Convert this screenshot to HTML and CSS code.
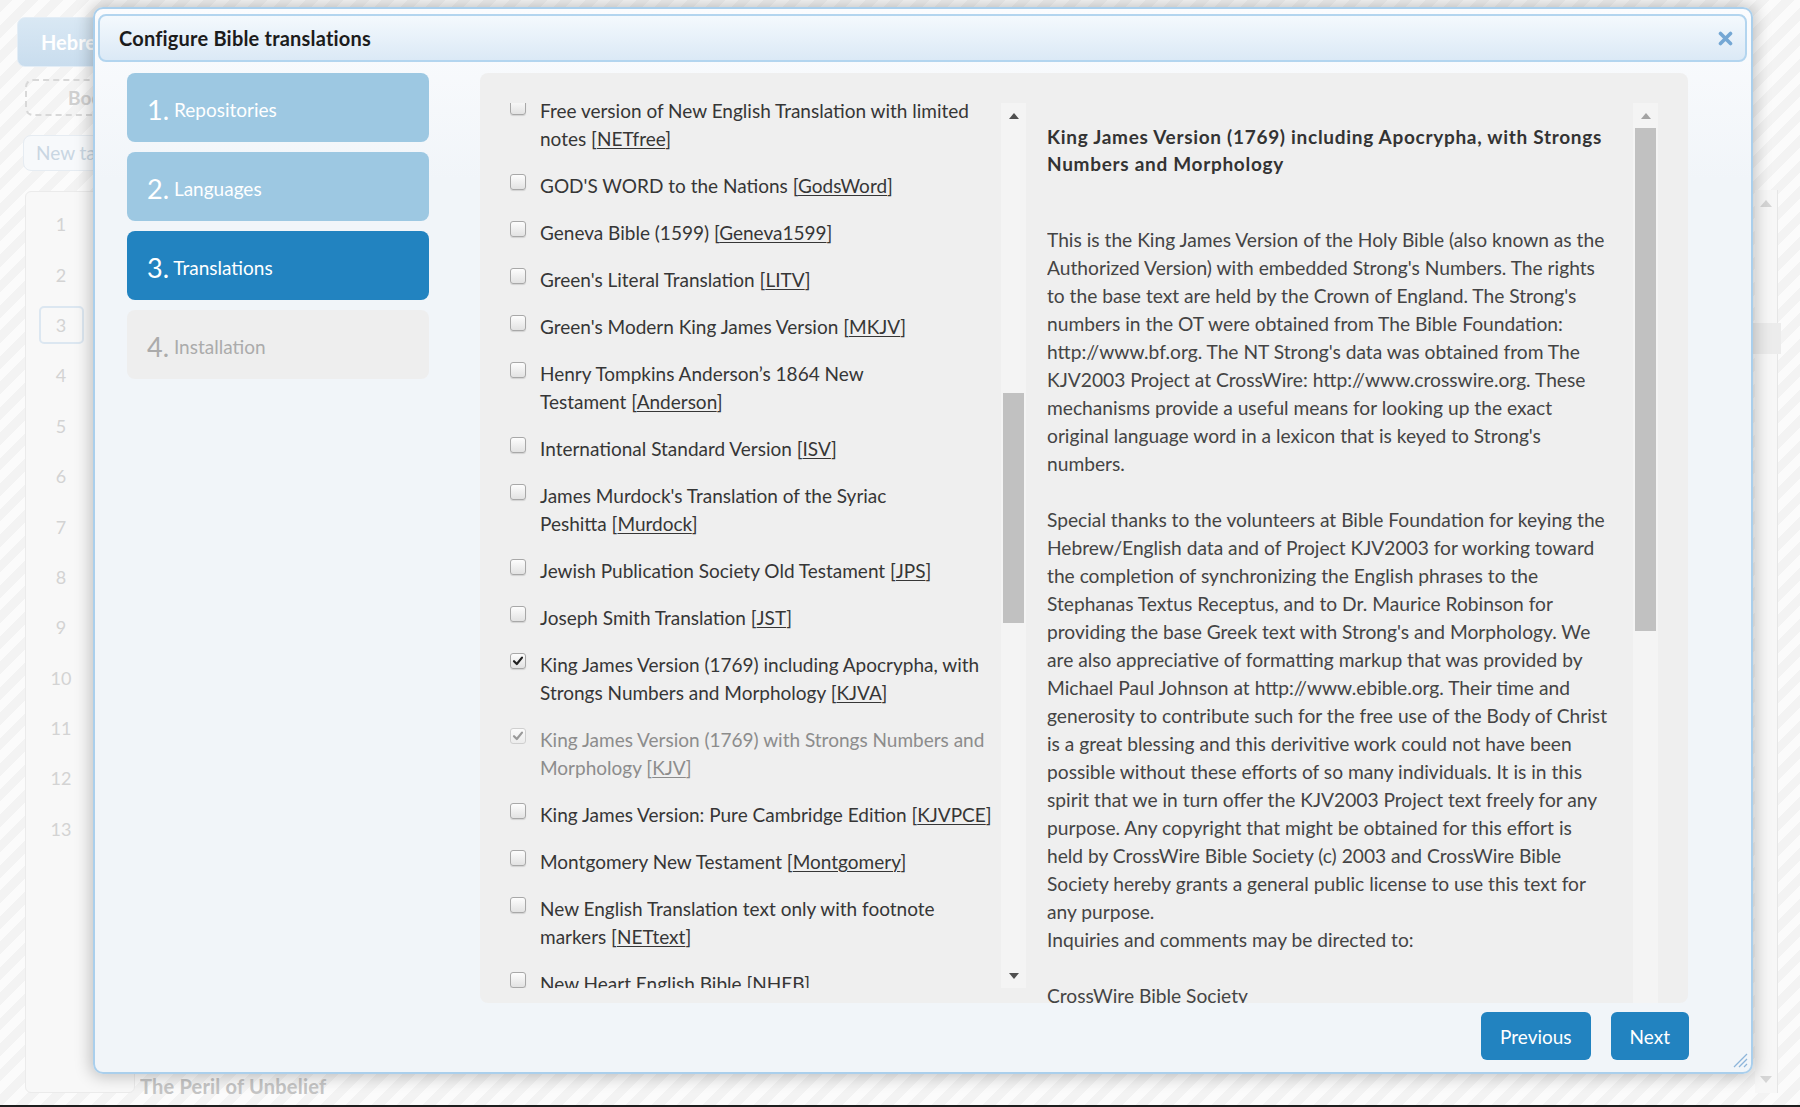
FILE: index.html
```html
<!DOCTYPE html>
<html lang="en">
<head>
<meta charset="utf-8">
<title>Configure Bible translations</title>
<link rel="stylesheet" href="styles.css">
</head>
<body>
<div class="page">
  <aside class="side">
    <div class="tab">Hebrews</div>
    <div class="dash-btn">Books</div>
    <div class="newtab">New tab</div>
    <div class="verses">
      <div class="vnum"><span>1</span></div>
      <div class="vnum"><span>2</span></div>
      <div class="vnum"><span class="sel">3</span></div>
      <div class="vnum"><span>4</span></div>
      <div class="vnum"><span>5</span></div>
      <div class="vnum"><span>6</span></div>
      <div class="vnum"><span>7</span></div>
      <div class="vnum"><span>8</span></div>
      <div class="vnum"><span>9</span></div>
      <div class="vnum"><span>10</span></div>
      <div class="vnum"><span>11</span></div>
      <div class="vnum"><span>12</span></div>
      <div class="vnum"><span>13</span></div>
    </div>
  </aside>
  <main class="main">
    <div class="chapter-clip"><div class="chapter-title">The Peril of Unbelief</div></div>
  </main>
  <aside class="rside">
    <div class="rtrack">
      <span class="rarrow up"></span>
      <div class="rbox"></div>
      <span class="rarrow down"></span>
    </div>
  </aside>
</div>
<div class="bottom-line"></div>

<div class="dialog">
  <div class="dlg-title">
    <h1>Configure Bible translations</h1>
    <svg class="close" width="15" height="15" viewBox="0 0 15 15"><path d="M2.5 2.5 L12.5 12.5 M12.5 2.5 L2.5 12.5" stroke="#74a7d4" stroke-width="3.6" stroke-linecap="round"/></svg>
  </div>
  <div class="dlg-body">
    <nav class="steps">
      <div class="step done"><span class="num">1.</span>&nbsp;Repositories</div>
      <div class="step done"><span class="num">2.</span>&nbsp;Languages</div>
      <div class="step current"><span class="num">3.</span>&nbsp;Translations</div>
      <div class="step todo"><span class="num">4.</span>&nbsp;Installation</div>
    </nav>
    <section class="panel">
      <div class="list-col">
        <div class="list-view">
          <div class="list">
            <label class="item"><span class="cb"></span><span class="lbl">Free version of New English Translation with limited notes&nbsp;[<u>NETfree</u>]</span></label>
            <label class="item"><span class="cb"></span><span class="lbl">GOD'S WORD to the Nations&nbsp;[<u>GodsWord</u>]</span></label>
            <label class="item"><span class="cb"></span><span class="lbl">Geneva Bible (1599)&nbsp;[<u>Geneva1599</u>]</span></label>
            <label class="item"><span class="cb"></span><span class="lbl">Green's Literal Translation&nbsp;[<u>LITV</u>]</span></label>
            <label class="item"><span class="cb"></span><span class="lbl">Green's Modern King James Version&nbsp;[<u>MKJV</u>]</span></label>
            <label class="item"><span class="cb"></span><span class="lbl">Henry Tompkins Anderson’s 1864 New Testament&nbsp;[<u>Anderson</u>]</span></label>
            <label class="item"><span class="cb"></span><span class="lbl">International Standard Version&nbsp;[<u>ISV</u>]</span></label>
            <label class="item"><span class="cb"></span><span class="lbl">James Murdock's Translation of the Syriac Peshitta&nbsp;[<u>Murdock</u>]</span></label>
            <label class="item"><span class="cb"></span><span class="lbl">Jewish Publication Society Old Testament&nbsp;[<u>JPS</u>]</span></label>
            <label class="item"><span class="cb"></span><span class="lbl">Joseph Smith Translation&nbsp;[<u>JST</u>]</span></label>
            <label class="item"><span class="cb checked"><svg width="14" height="14" viewBox="0 0 14 14"><path d="M3 7.2 L5.8 10 L11 3.6" fill="none" stroke="#222" stroke-width="2.2" stroke-linecap="round" stroke-linejoin="round"/></svg></span><span class="lbl">King James Version (1769) including Apocrypha, with Strongs Numbers and Morphology&nbsp;[<u>KJVA</u>]</span></label>
            <label class="item disabled"><span class="cb checked"><svg width="14" height="14" viewBox="0 0 14 14"><path d="M3 7.2 L5.8 10 L11 3.6" fill="none" stroke="#9a9a9a" stroke-width="2.2" stroke-linecap="round" stroke-linejoin="round"/></svg></span><span class="lbl">King James Version (1769) with Strongs Numbers and Morphology&nbsp;[<u>KJV</u>]</span></label>
            <label class="item"><span class="cb"></span><span class="lbl">King James Version: Pure Cambridge Edition&nbsp;[<u>KJVPCE</u>]</span></label>
            <label class="item"><span class="cb"></span><span class="lbl">Montgomery New Testament&nbsp;[<u>Montgomery</u>]</span></label>
            <label class="item"><span class="cb"></span><span class="lbl">New English Translation text only with footnote markers&nbsp;[<u>NETtext</u>]</span></label>
            <label class="item"><span class="cb"></span><span class="lbl">New Heart English Bible&nbsp;[<u>NHEB</u>]</span></label>
          </div>
        </div>
        <div class="sbar">
          <div class="sbtn"><svg width="10" height="6" viewBox="0 0 10 6"><path d="M0 6 L5 0 L10 6Z" fill="#4f4f4f"/></svg></div>
          <div class="track"><div class="thumb list-thumb"></div></div>
          <div class="sbtn"><svg width="10" height="6" viewBox="0 0 10 6"><path d="M0 0 L10 0 L5 6Z" fill="#4f4f4f"/></svg></div>
        </div>
      </div>
      <div class="desc-col">
        <div class="desc">
          <h4>King James Version (1769) including Apocrypha, with Strongs<br>Numbers and Morphology</h4>
          <p>This is the King James Version of the Holy Bible (also known as the<br>Authorized Version) with embedded Strong's Numbers. The rights<br>to the base text are held by the Crown of England. The Strong's<br>numbers in the OT were obtained from The Bible Foundation:<br>http://www.bf.org. The NT Strong's data was obtained from The<br>KJV2003 Project at CrossWire: http://www.crosswire.org. These<br>mechanisms provide a useful means for looking up the exact<br>original language word in a lexicon that is keyed to Strong's<br>numbers.<br><br>Special thanks to the volunteers at Bible Foundation for keying the<br>Hebrew/English data and of Project KJV2003 for working toward<br>the completion of synchronizing the English phrases to the<br>Stephanas Textus Receptus, and to Dr. Maurice Robinson for<br>providing the base Greek text with Strong's and Morphology. We<br>are also appreciative of formatting markup that was provided by<br>Michael Paul Johnson at http://www.ebible.org. Their time and<br>generosity to contribute such for the free use of the Body of Christ<br>is a great blessing and this derivitive work could not have been<br>possible without these efforts of so many individuals. It is in this<br>spirit that we in turn offer the KJV2003 Project text freely for any<br>purpose. Any copyright that might be obtained for this effort is<br>held by CrossWire Bible Society (c) 2003 and CrossWire Bible<br>Society hereby grants a general public license to use this text for<br>any purpose.<br>Inquiries and comments may be directed to:<br><br>CrossWire Bible Society</p>
        </div>
        <div class="sbar desc-sbar">
          <div class="sbtn"><svg width="10" height="6" viewBox="0 0 10 6"><path d="M0 6 L5 0 L10 6Z" fill="#a3a3a3"/></svg></div>
          <div class="track"><div class="thumb desc-thumb"></div></div>
        </div>
      </div>
    </section>
  </div>
  <div class="dlg-foot">
    <button class="btn">Previous</button>
    <button class="btn">Next</button>
  </div>
  <svg class="grip" width="17" height="17" viewBox="0 0 17 17"><path d="M16 3 L3 16 M16 8 L8 16 M16 13 L13 16" stroke="#8db5da" stroke-width="1.3"/></svg>
</div>
</body>
</html>
```
FILE: styles.css
```css
* { box-sizing: border-box; }

body {
  margin: 0;
  width: 1800px;
  height: 1107px;
  overflow: hidden;
  position: relative;
  font-family: Lato, "Open Sans", sans-serif;
  background: #1e1e1e;
}

/* ---------- background page (dimmed behind the modal) ---------- */
.page {
  height: 1105px;
  display: flex;
  background: repeating-linear-gradient(135deg, #f3f3f3 0 9px, #fbfbfb 9px 18px);
}
.bottom-line { height: 2px; background: #1e1e1e; }

.side {
  width: 98px;
  flex: none;
  padding: 17px 0 0 17px;
  display: flex;
  flex-direction: column;
}
.tab {
  width: 110px;
  height: 50px;
  flex: none;
  border-radius: 8px;
  border: 1px solid #e3edf6;
  background: linear-gradient(#d9e8f4, #c9ddee);
  color: #fff;
  font-weight: 700;
  font-size: 20px;
  line-height: 48px;
  padding-left: 23px;
  white-space: nowrap;
}
.dash-btn {
  margin: 12px 0 0 8px;
  width: 110px;
  height: 37px;
  flex: none;
  border: 2px dashed #d8d8d8;
  border-radius: 8px;
  color: #d0d0d0;
  font-weight: 700;
  font-size: 19px;
  line-height: 33px;
  padding-left: 41px;
  white-space: nowrap;
}
.newtab {
  margin: 19px 0 0 6px;
  width: 110px;
  height: 36px;
  flex: none;
  border: 1px solid #e6ecf2;
  border-radius: 8px;
  background: #f7f9fb;
  color: #c9d6e2;
  font-size: 19px;
  line-height: 34px;
  padding-left: 12px;
  white-space: nowrap;
}
.verses {
  margin: 20px 0 0 8px;
  width: 110px;
  height: 902px;
  flex: none;
  border: 1px solid #ebebeb;
  border-radius: 6px;
  background: #f8f8f8;
  padding-top: 7px;
}
.vnum {
  height: 50.4px;
  width: 70px;
  display: flex;
  align-items: center;
  justify-content: center;
  color: #d3d3d3;
  font-size: 18px;
}
.vnum .sel {
  width: 45px;
  height: 38px;
  border: 2px solid #dce7f1;
  border-radius: 5px;
  display: flex;
  align-items: center;
  justify-content: center;
}

.main {
  flex: 1;
  display: flex;
  flex-direction: column;
  justify-content: flex-end;
  padding: 0 0 10px 42px;
}
.chapter-clip { height: 20px; overflow: hidden; }
.chapter-title {
  line-height: 28px;
  margin-top: -3px;
  font-size: 20px;
  font-weight: 700;
  letter-spacing: 0.2px;
  color: #c4c4c4;
}

.rside {
  width: 53px;
  flex: none;
  padding: 190px 0 0 8px;
}
.rtrack {
  width: 23px;
  height: 903px;
  border-right: 1px solid #e6e6e6;
  background: #f7f7f7;
  display: flex;
  flex-direction: column;
  align-items: center;
  padding: 10px 0;
}
.rarrow { width: 0; height: 0; border-left: 6px solid transparent; border-right: 6px solid transparent; }
.rarrow.up { border-bottom: 7px solid #d6d6d6; }
.rarrow.down { border-top: 7px solid #d6d6d6; margin-top: auto; }
.rbox { width: 30px; height: 31px; background: #ececec; margin-top: 116px; }

/* ---------- modal dialog ---------- */
.dialog {
  position: absolute;
  left: 93px;
  top: 7px;
  width: 1660px;
  height: 1067px;
  border: 2px solid #aacfec;
  border-radius: 10px;
  background: linear-gradient(#fbfcfe, #f1f5f9 170px);
  box-shadow: 0 0 16px 3px rgba(0, 0, 0, 0.22);
  padding: 5px 4px 0 3px;
  display: flex;
  flex-direction: column;
}
.dlg-title {
  height: 48px;
  flex: none;
  border: 2px solid #b3d5ef;
  border-radius: 8px;
  background: linear-gradient(#f4f9fd, #dbe9f6);
  display: flex;
  align-items: center;
  justify-content: space-between;
  padding: 0 12px 0 19px;
}
.dlg-title h1 {
  margin: 0;
  font-size: 20px;
  font-weight: 700;
  letter-spacing: 0.2px;
  color: #1c1c1c;
}
.close { display: block; }

.dlg-body {
  display: flex;
  gap: 51px;
  padding: 11px 0 0 29px;
}

.steps {
  width: 302px;
  flex: none;
  display: flex;
  flex-direction: column;
  gap: 10px;
}
.step {
  height: 69px;
  border-radius: 8px;
  display: flex;
  align-items: center;
  padding: 4px 0 0 20px;
  font-size: 19px;
  line-height: 27px;
  color: #fff;
}
.step .num { font-size: 27px; }
.step.done { background: #9dc8e2; }
.step.current { background: #2283c0; }
.step.todo { background: #eeeeee; color: #ababab; }

.panel {
  width: 1208px;
  height: 930px;
  flex: none;
  background: #efefef;
  border-radius: 8px;
  overflow: hidden;
  padding: 30px 30px 0;
  display: flex;
  gap: 21px;
  align-items: flex-start;
}

.list-col {
  width: 516px;
  height: 885px;
  flex: none;
  display: flex;
}
.list-view {
  width: 491px;
  height: 100%;
  overflow: hidden;
}
.list { margin-top: -16px; }
.item {
  display: flex;
  padding: 10px 0 9px;
  font-size: 19px;
  line-height: 28px;
  color: #363636;
}
.item u { text-underline-offset: 2px; text-decoration-thickness: 1px; }
.item.disabled { color: #8c8c8c; }
.cb {
  flex: none;
  width: 16px;
  height: 16px;
  margin: 2px 14px 0 0;
  border: 1px solid #a8a8a8;
  border-radius: 3px;
  background: linear-gradient(#fdfdfd, #e2e2e2);
  box-shadow: 0 1px 1px rgba(0, 0, 0, 0.12);
  display: flex;
  align-items: center;
  justify-content: center;
}
.item.disabled .cb { border-color: #cfcfcf; background: linear-gradient(#fbfbfb, #ececec); box-shadow: none; }
.lbl { flex: 1; }

.sbar {
  width: 25px;
  flex: none;
  height: 100%;
  background: #f4f4f4;
  display: flex;
  flex-direction: column;
}
.sbtn {
  height: 25px;
  flex: none;
  display: flex;
  align-items: center;
  justify-content: center;
}
.sbtn svg { display: block; }
.track { flex: 1; }
.thumb { margin: 0 2px; background: #c1c1c1; }
.list-thumb { margin-top: 265px; height: 230px; }
.desc-thumb { height: 503px; }

.desc-col {
  width: 611px;
  height: 900px;
  flex: none;
  display: flex;
  overflow: hidden;
}
.desc {
  width: 586px;
  flex: none;
  padding-top: 20px;
}
.desc h4 {
  margin: 0 0 49px;
  font-size: 19px;
  line-height: 27px;
  font-weight: 700;
  letter-spacing: 0.7px;
  color: #333;
}
.desc p {
  margin: 0;
  font-size: 19.2px;
  line-height: 28px;
  color: #444;
  white-space: nowrap;
}

.dlg-foot {
  display: flex;
  justify-content: flex-end;
  gap: 20px;
  padding: 9px 58px 0 0;
}
.btn {
  height: 48px;
  padding: 0 19px;
  border: none;
  border-radius: 6px;
  background: #2283c0;
  color: #fff;
  font-family: Lato, "Open Sans", sans-serif;
  font-size: 19px;
}

.grip {
  position: absolute;
  right: 3px;
  bottom: 4px;
}
```
